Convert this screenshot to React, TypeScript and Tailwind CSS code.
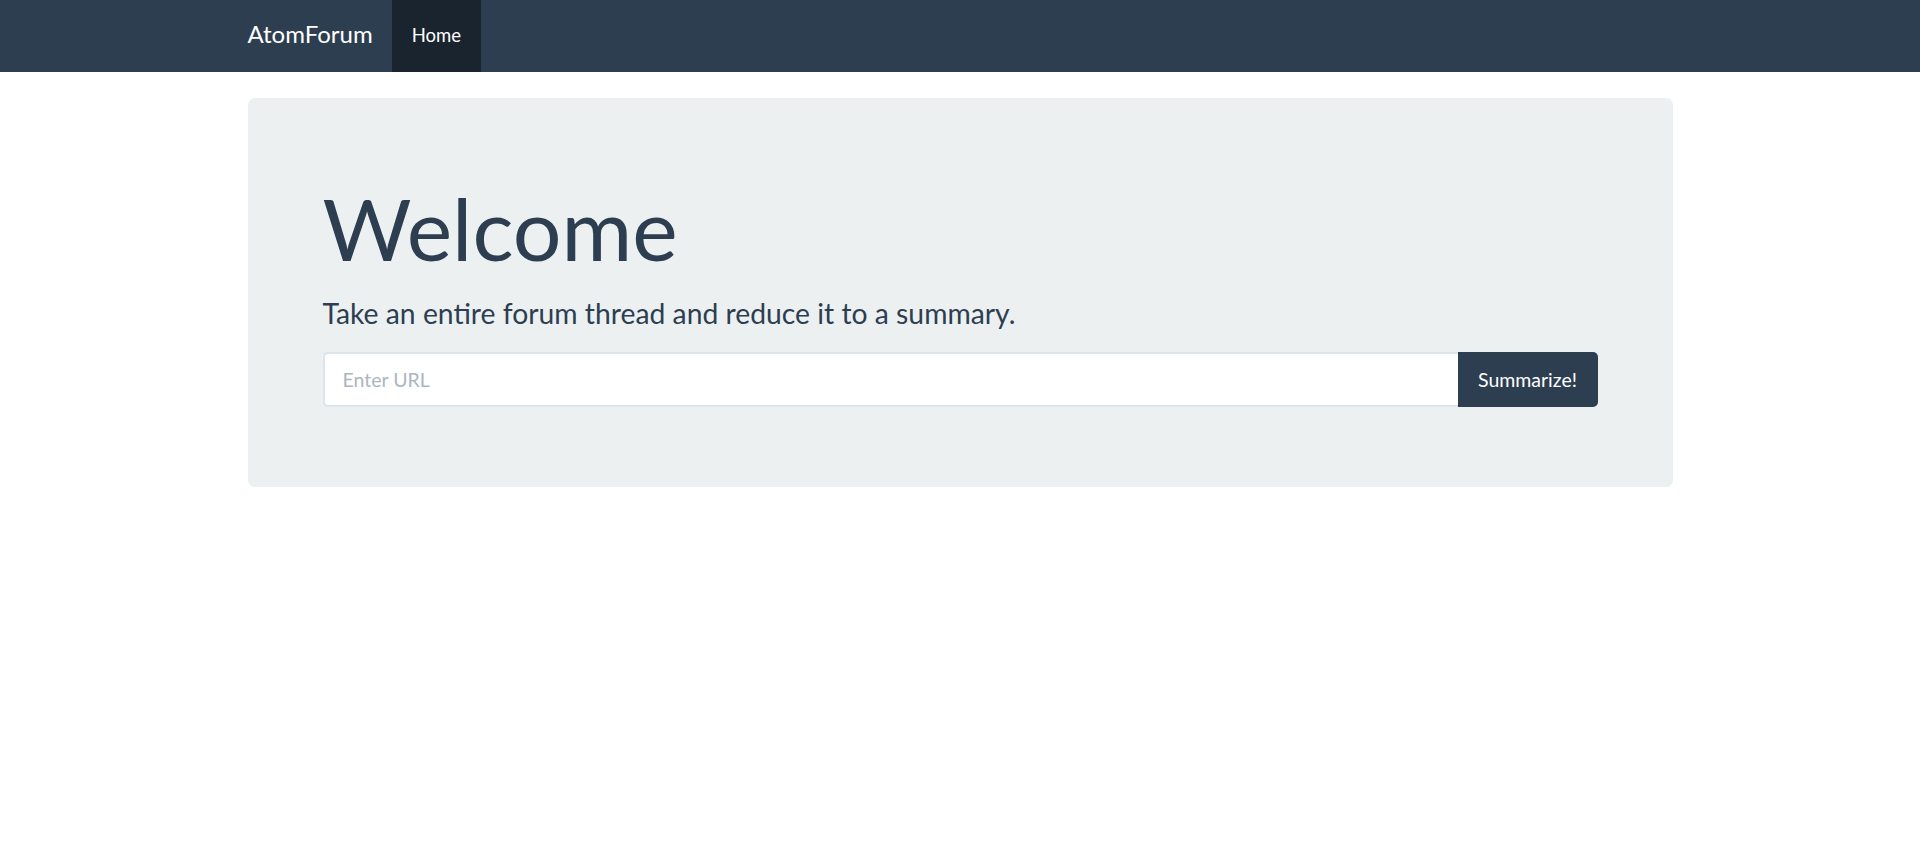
export default function App() {
  return (
    <div className="min-h-screen bg-white font-['Lato','Noto_Sans',sans-serif] text-[#2c3e50]">
      <nav className="h-[72px] bg-[#2c3e50]">
        <div className="mx-auto flex h-full w-[1425px] items-stretch">
          <a className="flex items-center pb-[5px] pr-[19px] text-[24px] text-white">AtomForum</a>
          <a className="flex items-center bg-[#1a242f] px-5 text-[18.5px] text-white">Home</a>
        </div>
      </nav>
      <main className="mx-auto mt-[26px] w-[1425px]">
        <div className="rounded-[7px] bg-[#ecf0f1] px-[75px] pb-[80px] pt-[78px]">
          <h1 className="text-[86px] leading-[1.2]">Welcome</h1>
          <p className="mt-[15px] text-[28.3px] leading-[1.4]">Take an entire forum thread and reduce it to a summary.</p>
          <div className="mt-[18px] flex h-[55px]">
            <input
              className="min-w-0 flex-1 rounded-l-[5px] border-2 border-r-0 border-[#dce4ec] bg-white px-[18px] text-[19.5px] text-[#2c3e50] outline-none placeholder:text-[#acb6c0]"
              placeholder="Enter URL"
            />
            <button className="w-[140px] rounded-r-[5px] bg-[#2c3e50] text-[19.5px] text-white">Summarize!</button>
          </div>
        </div>
      </main>
    </div>
  );
}
